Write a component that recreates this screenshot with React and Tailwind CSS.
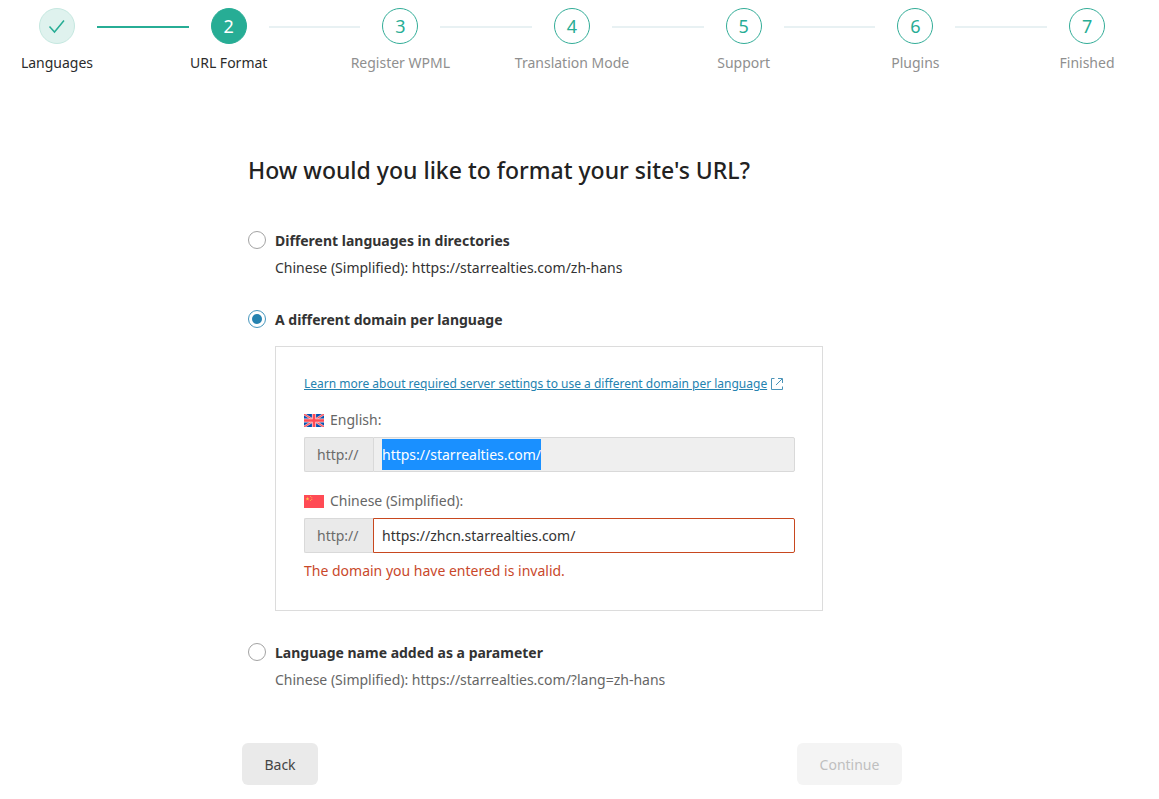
import React, { useEffect, useRef, useState } from 'react'

const steps = [
  'Languages',
  'URL Format',
  'Register WPML',
  'Translation Mode',
  'Support',
  'Plugins',
  'Finished',
]

const CURRENT = 1

function circleClass(i) {
  if (i < CURRENT) return 'border-[#c5e8e0] bg-[#dff2ee] text-[#27ad95]'
  if (i === CURRENT) return 'border-[#27ad95] bg-[#27ad95] text-white'
  return 'border-[#33ad98] bg-white text-[#27ad95]'
}

function Stepper() {
  return (
    <ol className="flex items-start px-[17px] pt-2">
      {steps.map((label, i) => (
        <React.Fragment key={label}>
          {i > 0 && (
            <li
              aria-hidden="true"
              className={`mt-[18px] h-0.5 flex-1 ${i <= CURRENT ? 'bg-[#27ad95]' : 'bg-[#e8f1f3]'}`}
            />
          )}
          <li className="flex w-20 flex-col items-center gap-[9px]">
            <span className={`flex h-9 w-9 items-center justify-center rounded-full border text-lg ${circleClass(i)}`}>
              {i < CURRENT ? <CheckIcon /> : i + 1}
            </span>
            <span className={`text-sm leading-5 whitespace-nowrap ${i <= CURRENT ? 'text-[#2b2b2b]' : 'text-[#8f8f8f]'}`}>
              {label}
            </span>
          </li>
        </React.Fragment>
      ))}
    </ol>
  )
}

function CheckIcon() {
  return (
    <svg width="18" height="16" viewBox="0 0 18 16" fill="none" stroke="currentColor" strokeWidth="1.5">
      <path d="M1.5 8.5 L6.5 14 L16 2.5" />
    </svg>
  )
}

function ExternalIcon() {
  return (
    <svg className="shrink-0" width="12" height="12" viewBox="0 0 12 12" fill="none" stroke="#4a93b8">
      <path d="M3.5 0.5 H0.5 V11.5 H11.5 V8.5" />
      <path d="M5 7 L11 1 M7 0.5 H11.5 V5" />
    </svg>
  )
}

function FlagUK() {
  return (
    <svg width="20" height="13" viewBox="0 0 20 13">
      <rect width="20" height="13" fill="#0052b4" />
      <path d="M0 0 L20 13 M20 0 L0 13" stroke="#f0a8b0" strokeWidth="2.4" />
      <path d="M0 0 L20 13 M20 0 L0 13" stroke="#ff4b55" strokeWidth="1" />
      <path d="M10 0 V13 M0 6.5 H20" stroke="#f5d5da" strokeWidth="4.2" />
      <path d="M10 0 V13 M0 6.5 H20" stroke="#ff4b55" strokeWidth="2.6" />
    </svg>
  )
}

function FlagChina() {
  return (
    <svg width="20" height="13" viewBox="0 0 20 13">
      <rect width="20" height="13" fill="#ff4b55" />
      <path d="M3.5 1.8 L4 3.2 H5.4 L4.3 4.1 L4.7 5.5 L3.5 4.7 L2.3 5.5 L2.7 4.1 L1.6 3.2 H3 Z" fill="#ffc34d" />
      <circle cx="6.6" cy="1.6" r="0.5" fill="#ffc34d" />
      <circle cx="7.8" cy="2.8" r="0.5" fill="#ffc34d" />
      <circle cx="7.8" cy="4.4" r="0.5" fill="#ffc34d" />
      <circle cx="6.6" cy="5.6" r="0.5" fill="#ffc34d" />
    </svg>
  )
}

function Option({ id, label, value, onChange, children }) {
  return (
    <div>
      <div className="flex items-center gap-[9px]">
        <input
          type="radio"
          id={id}
          name="url-format"
          checked={value === id}
          onChange={() => onChange(id)}
          className="h-[18px] w-[18px] appearance-none rounded-full border border-[#a3a3a3] bg-white bg-clip-content p-[3px] checked:border-[#4596bd] checked:bg-[#2482b0]"
        />
        <label htmlFor={id} className="pt-0.5 text-sm leading-5 font-bold text-[#333]">{label}</label>
      </div>
      <div className="pl-[27px]">{children}</div>
    </div>
  )
}

function DomainField({ id, flag, label, error, inputRef, ...props }) {
  const inputColors = error ? 'border-[#c8481f] bg-white' : 'border-[#d9d9d9] bg-[#efefef]'

  return (
    <div>
      <label htmlFor={id} className="flex items-center gap-1.5 text-sm leading-5 text-[#666]">
        {flag}
        {label}
      </label>
      <div className="mt-[7px] flex h-[35px]">
        <span className="flex w-[69px] items-center rounded-l-xs border border-r-0 border-[#d9d9d9] bg-[#eaeaea] pl-3 text-sm text-[#6b6b6b]">
          http://
        </span>
        <input
          id={id}
          type="text"
          ref={inputRef}
          aria-invalid={error ? true : undefined}
          className={`min-w-0 flex-1 rounded-r-xs border px-2 text-sm leading-[31px] text-[#333] outline-none selection:bg-[#1a90ff] selection:text-white ${inputColors}`}
          {...props}
        />
      </div>
      {error && <p className="mt-2 text-sm leading-5 text-[#c9482a]">{error}</p>}
    </div>
  )
}

export default function App() {
  const [format, setFormat] = useState('domain')
  const [domain, setDomain] = useState('https://zhcn.starrealties.com/')
  const defaultRef = useRef(null)

  useEffect(() => {
    defaultRef.current.focus()
    defaultRef.current.select()
  }, [])

  return (
    <div className="bg-white pr-[15px] pb-3 font-['Noto_Sans','Open_Sans',sans-serif]">
      <Stepper />

      <main className="mx-auto mt-[81px] max-w-[660px]">
        <form className="px-1.5" onSubmit={e => e.preventDefault()}>
          <h1 className="text-[23px] leading-8 font-medium text-[#222]">How would you like to format your site's URL?</h1>

          <div className="mt-[43px] flex flex-col gap-[30px]">
            <Option id="directory" label="Different languages in directories" value={format} onChange={setFormat}>
              <p className="mt-[7px] text-sm leading-5 text-[#333]">Chinese (Simplified): https://starrealties.com/zh-hans</p>
            </Option>

            <Option id="domain" label="A different domain per language" value={format} onChange={setFormat}>
              <div className="mt-4 flex max-w-[548px] flex-col border border-[#dcdcdc] pt-[27px] pr-[27px] pb-[29px] pl-7">
                <div className="mb-4 flex items-center gap-1">
                  <a href="#server-settings" className="text-xs leading-5 whitespace-nowrap text-[#2482b0] underline">
                    Learn more about required server settings to use a different domain per language
                  </a>
                  <ExternalIcon />
                </div>
                <div className="flex flex-col gap-[19px]">
                  <DomainField
                    id="domain-en"
                    flag={<FlagUK />}
                    label="English:"
                    inputRef={defaultRef}
                    value="https://starrealties.com/"
                    readOnly
                  />
                  <DomainField
                    id="domain-zh"
                    flag={<FlagChina />}
                    label="Chinese (Simplified):"
                    value={domain}
                    onChange={e => setDomain(e.target.value)}
                    error="The domain you have entered is invalid."
                  />
                </div>
              </div>
            </Option>

            <Option id="parameter" label="Language name added as a parameter" value={format} onChange={setFormat}>
              <p className="mt-[7px] text-sm leading-5 text-[#666]">Chinese (Simplified): https://starrealties.com/?lang=zh-hans</p>
            </Option>
          </div>
        </form>

        <div className="mt-[53px] flex justify-between">
          <button type="button" className="h-[42px] w-[76px] rounded-md bg-[#eaeaea] pt-0.5 text-sm text-[#444]">Back</button>
          <button type="button" disabled className="h-[42px] w-[105px] rounded-md bg-[#f4f4f4] pt-0.5 text-sm text-[#bfbfbf]">Continue</button>
        </div>
      </main>
    </div>
  )
}
